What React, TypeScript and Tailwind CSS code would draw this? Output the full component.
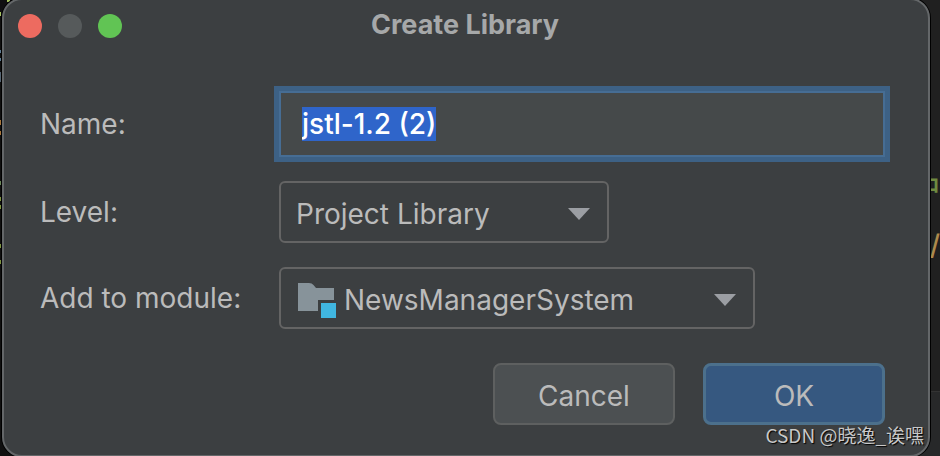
import { useEffect, useRef, useState } from "react"
import type { ReactNode } from "react"

const LEVELS = ["Project Library", "Global Library", "Module Library"]
const MODULES = ["NewsManagerSystem"]

// Bits of the editor that peek out left of the dialog
const GUTTER_MARKS = [
    { y: 12, h: 4, color: "#a5c261" },
    { y: 50, h: 3, color: "#5f7d94" },
    { y: 58, h: 3, color: "#5f7d94" },
    { y: 72, h: 10, color: "#566573" },
    { y: 120, h: 5, color: "#a8763a" },
    { y: 131, h: 4, color: "#a8763a" },
    { y: 181, h: 4, color: "#6a8759" },
    { y: 197, h: 4, color: "#7d9440" },
    { y: 205, h: 4, color: "#7d9440" },
    { y: 244, h: 4, color: "#7d9440" },
    { y: 260, h: 4, color: "#7d9440" },
]

function ModuleIcon() {
    return (
        <svg width="38" height="36" viewBox="0 0 38 36" aria-hidden="true">
            <path d="M0 0H11Q14 0 15.5 2L18 5H36V17H20V28H0Z" fill="#87939a" />
            <rect x="23" y="20" width="15" height="15" fill="#40b6e0" />
        </svg>
    )
}

interface ComboProps {
    id: string
    options: string[]
    className: string
    selectClassName: string
    icon?: ReactNode
}

function Combo({ id, options, className, selectClassName, icon }: ComboProps) {
    const [value, setValue] = useState(options[0])

    return (
        <div className={`relative ${className}`}>
            {icon && <span className="pointer-events-none absolute left-[19px] top-4">{icon}</span>}
            <select
                id={id}
                value={value}
                onChange={(e) => setValue(e.target.value)}
                className={`h-[62px] w-full appearance-none rounded-md border-2 border-[#646464] bg-[#3c3f41] pt-1 text-[#bbbbbb] outline-none ${selectClassName}`}
            >
                {options.map((option) => (
                    <option key={option}>{option}</option>
                ))}
            </select>
            <svg
                className="pointer-events-none absolute right-[19px] top-[27px]"
                width="22"
                height="12"
                viewBox="0 0 22 12"
                aria-hidden="true"
            >
                <path d="M0 0H22L11 12Z" fill="#9b9ea3" />
            </svg>
        </div>
    )
}

export default function App() {
    const nameRef = useRef<HTMLInputElement>(null)
    const [name, setName] = useState("jstl-1.2 (2)")

    useEffect(() => {
        nameRef.current?.focus()
        nameRef.current?.select()
    }, [])

    return (
        <div className="relative min-h-screen overflow-hidden bg-[#202020] pl-0.5 pr-[10px] font-['Inter','Noto_Sans_CJK_SC',sans-serif] text-[28px]">
            <div aria-hidden="true">
                <svg className="absolute left-0 top-0" width="24" height="456">
                    <rect width="24" height="456" fill="#101010" />
                    {GUTTER_MARKS.map((mark) => (
                        <rect key={mark.y} x="0" y={mark.y} width="1" height={mark.h} fill={mark.color} />
                    ))}
                    <rect x="7" y="0" width="3" height="2" fill="#a5c261" />
                </svg>
                <span className="absolute right-0 top-[172px] text-[28px] font-medium leading-8 text-[#6f8a40]">中</span>
                <span className="absolute right-0 top-[227px] text-[28px] font-medium leading-9 text-[#ad8a4c]">/</span>
                <div className="absolute bottom-0 right-0 h-[66px] w-6 border-t border-[#333333] bg-[#272829]" />
            </div>

            <form
                onSubmit={(e) => e.preventDefault()}
                className="relative -mt-0.5 rounded-[20px] border-2 border-[#646769] bg-[#3c3f41] pb-[30px] text-[#bbbbbb] shadow-[0_0_0_1px_#000000]"
            >
                <header className="grid h-[52px] grid-cols-[1fr_auto_1fr] items-center pl-3.5 pr-4">
                    <div className="flex gap-4">
                        <button type="button" aria-label="Close" className="size-6 rounded-full bg-[#ed6b60]" />
                        <button type="button" aria-label="Minimize" disabled className="size-6 rounded-full bg-[#565a5b]" />
                        <button type="button" aria-label="Zoom" className="size-6 rounded-full bg-[#61c454]" />
                    </div>
                    <h1 className="pb-0.5 text-[27px] font-bold leading-8 text-[#a6a8a9]">Create Library</h1>
                </header>

                <div className="grid grid-cols-[239px_1fr] items-center gap-y-6 pl-9 pr-[43px] pt-[39px]">
                    <label htmlFor="name">Name:</label>
                    <input
                        ref={nameRef}
                        id="name"
                        type="text"
                        value={name}
                        onChange={(e) => setName(e.target.value)}
                        className="h-[66px] w-full border-2 border-[#466d94] bg-[#45494a] px-[21px] font-medium text-[#bbbbbb] caret-transparent outline-none ring-[5px] ring-[#3d6185] selection:bg-[#2f65ca] selection:text-white"
                    />

                    <label htmlFor="level">Level:</label>
                    <Combo id="level" options={LEVELS} className="w-[330px]" selectClassName="pl-[15px] pr-14" />

                    <label htmlFor="module">Add to module:</label>
                    <Combo
                        id="module"
                        options={MODULES}
                        className="w-[476px]"
                        selectClassName="pl-[63px] pr-14"
                        icon={<ModuleIcon />}
                    />
                </div>

                <div className="flex justify-end gap-7 pr-[43px] pt-[34px]">
                    <button
                        type="button"
                        className="h-[62px] w-[182px] rounded-lg border-2 border-[#5e6060] bg-[#4c5052] pt-1"
                    >
                        Cancel
                    </button>
                    <button
                        type="submit"
                        className="h-[62px] w-[182px] rounded-lg border-[3px] border-[#4c708c] bg-[#365880] pt-1"
                    >
                        OK
                    </button>
                </div>
            </form>

            <p className="pointer-events-none absolute bottom-2 right-4 font-['Noto_Sans_CJK_SC',sans-serif] text-[19px] leading-7 text-[#c8c8c8] [text-shadow:1px_1px_1px_#000000]">
                CSDN @晓逸_诶嘿
            </p>
        </div>
    )
}
